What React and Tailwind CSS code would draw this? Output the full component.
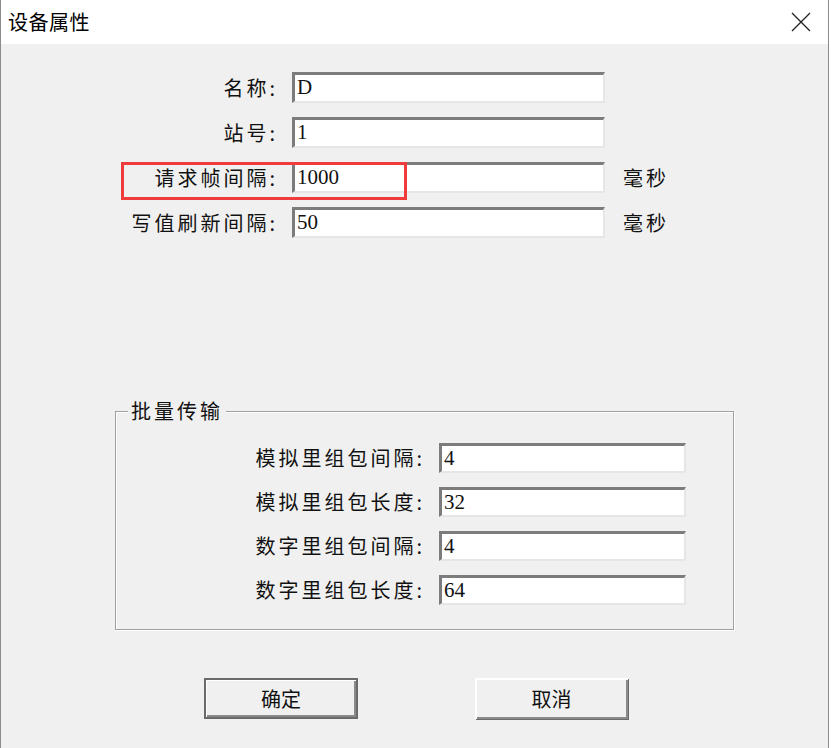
import React from "react";

const cjk = { fontFamily: '"Noto Sans CJK SC", "Noto Sans", sans-serif' };
const num = { fontFamily: '"Liberation Serif", "DejaVu Serif", serif' };

const topRows = [
  { label: "名称:", value: "D" },
  { label: "站号:", value: "1" },
  { label: "请求帧间隔:", value: "1000", unit: "毫秒" },
  { label: "写值刷新间隔:", value: "50", unit: "毫秒" },
];

const batchRows = [
  { label: "模拟里组包间隔:", value: "4" },
  { label: "模拟里组包长度:", value: "32" },
  { label: "数字里组包间隔:", value: "4" },
  { label: "数字里组包长度:", value: "64" },
];

const Field = ({ value, className }) => (
  <div
    className={
      "flex items-center bg-white pl-[2px] text-[21px] text-[#111] border-t-[3px] border-l-[3px] border-r-2 border-b-2 border-t-[#7c7c7c] border-l-[#7c7c7c] border-r-[#e6e6e6] border-b-[#e6e6e6] " +
      className
    }
    style={num}
  >
    {value}
  </div>
);

export default function App() {
  return (
    <div className="w-[831px] h-[748px] bg-white" style={cjk}>
      <div className="w-[829px] h-[748px] flex flex-col border-l border-r border-[#8c8c8c]">
        {/* title bar */}
        <div className="h-[44px] flex items-center justify-between bg-white pl-[7px] pr-[17px]">
          <span className="text-[20px] tracking-[0.5px] text-black leading-none">设备属性</span>
          <svg width="20" height="20" viewBox="0 0 20 20">
            <path d="M1 1 L19 19 M19 1 L1 19" stroke="#222" strokeWidth="1.3" fill="none" />
          </svg>
        </div>

        {/* body */}
        <div className="relative flex-1 bg-[#f0f0f0] flex flex-col">
          <div className="flex flex-col gap-[14px] pt-[28px]">
            {topRows.map((r) => (
              <div key={r.label} className="flex items-center h-[31px]">
                <div className="w-[291px] pr-[14px] text-right text-[20px] tracking-[3px] text-[#111] leading-none">
                  {r.label}
                </div>
                <Field value={r.value} className="w-[313px] h-[31px]" />
                {r.unit && (
                  <span className="ml-[18px] text-[20px] tracking-[3px] text-[#111] leading-none">
                    {r.unit}
                  </span>
                )}
              </div>
            ))}
          </div>

          {/* annotation box */}
          <div className="absolute left-[120px] top-[118px] w-[286px] h-[38px] border-[3px] border-[#ef3b3b]" />

          {/* group box */}
          <div className="relative ml-[114px] mt-[173px] w-[619px] h-[219px] border border-[#a0a0a0] shadow-[1px_1px_0_#fff,inset_1px_1px_0_#fff]">
            <span className="absolute left-[12px] -top-[13px] bg-[#f0f0f0] px-[3px] text-[20px] tracking-[3px] text-[#111] leading-[24px]">
              批量传输
            </span>
            <div className="flex flex-col gap-[14px] pt-[31px]">
              {batchRows.map((r, i) => (
                <div key={i} className="flex items-center h-[30px]">
                  <div className="w-[323px] pr-[14px] text-right text-[20px] tracking-[3px] text-[#111] leading-none">
                    {r.label}
                  </div>
                  <Field value={r.value} className="w-[247px] h-[30px]" />
                </div>
              ))}
            </div>
          </div>

          {/* buttons */}
          <div className="flex gap-[117px] pl-[203px] mt-[48px]">
            <button className="w-[154px] h-[41px] bg-[#f0f0f0] border-2 border-[#6a6a6a] shadow-[inset_1px_1px_0_#fff,inset_-2px_-2px_0_#8a8a8a] text-[20px] text-[#111]">
              确定
            </button>
            <button className="w-[153px] h-[41px] bg-[#f0f0f0] shadow-[inset_2px_2px_0_#fff,inset_-2px_-2px_0_#8a8a8a,1px_1px_0_#6a6a6a] text-[20px] text-[#111]">
              取消
            </button>
          </div>
        </div>
      </div>
    </div>
  );
}
